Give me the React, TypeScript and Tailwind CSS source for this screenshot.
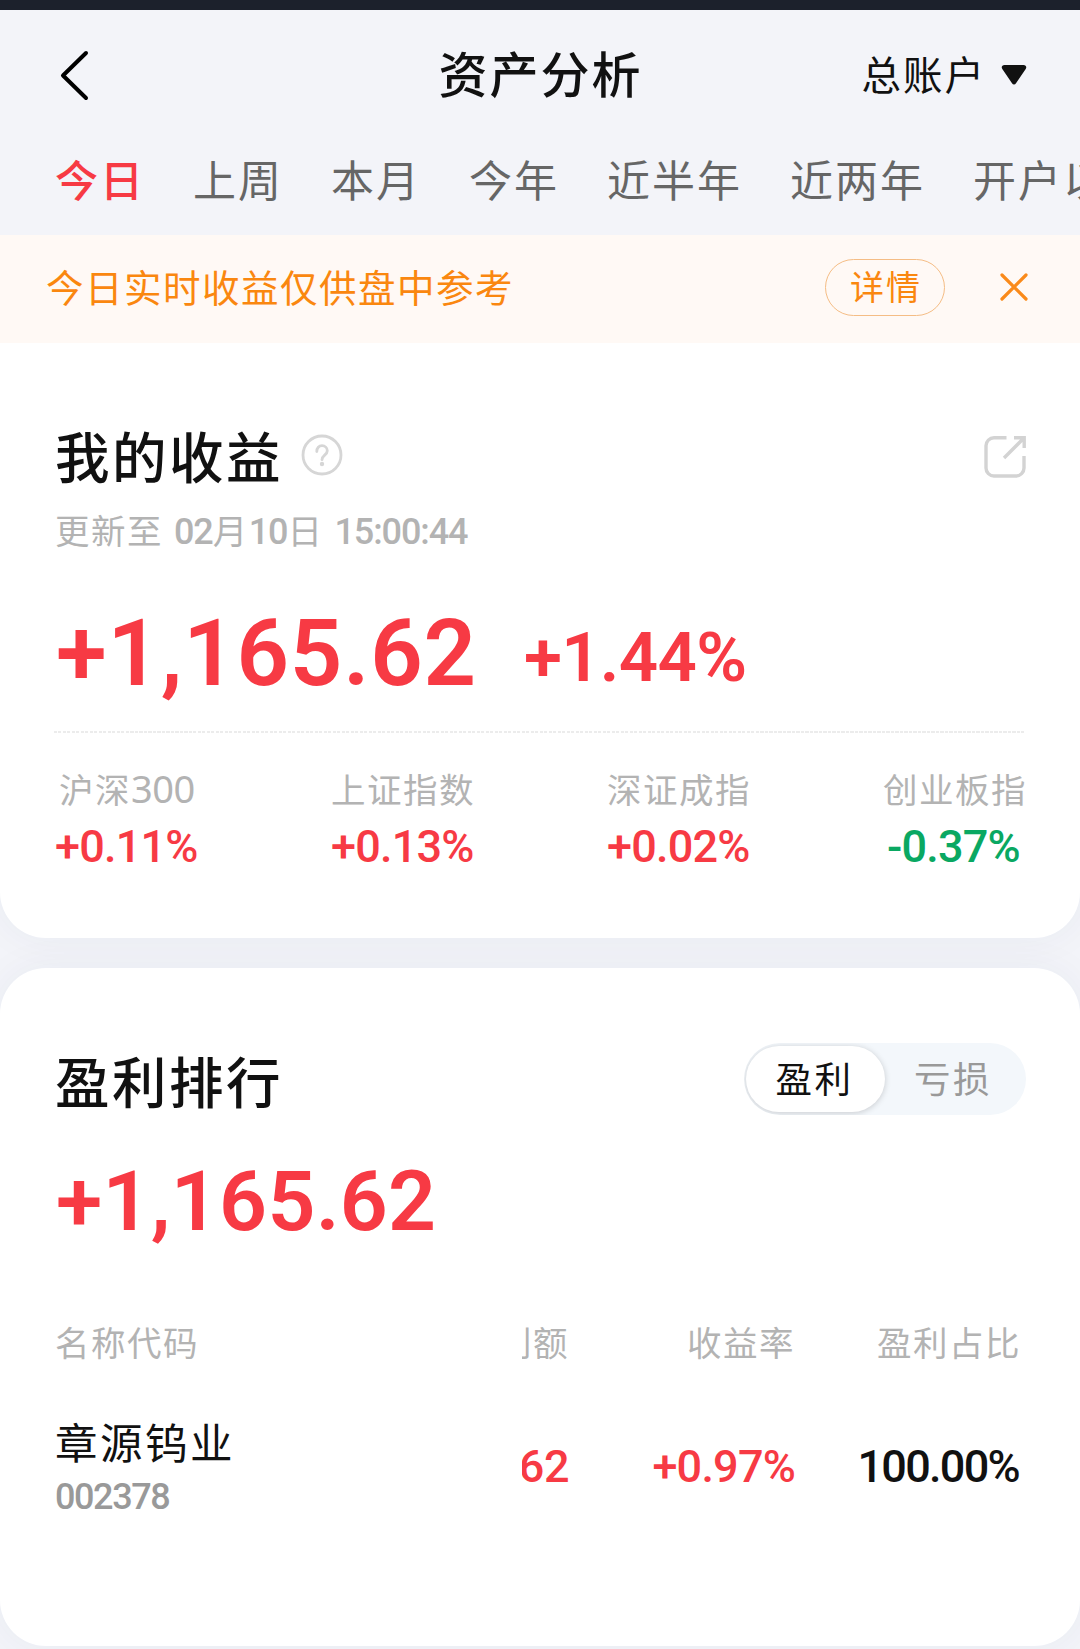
import clsx from 'clsx'

const periods = ['今日', '上周', '本月', '今年', '近半年', '近两年', '开户以来']

const indexes = [
  { name: '沪深', digits: '300', change: '+0.11%' },
  { name: '上证指数', change: '+0.13%' },
  { name: '深证成指', change: '+0.02%' },
  { name: '创业板指', change: '-0.37%' },
]

const holdings = [
  { name: '章源钨业', code: '002378', amount: '+1,165.62', rate: '+0.97%', share: '100.00%' },
]

function Header() {
  return (
    <header className="h-[225px] bg-[#f3f4f9]">
      <div className="grid h-[130px] grid-cols-[1fr_auto_1fr] items-center pl-[59px] pr-[53px]">
        <svg width="32" height="52" viewBox="0 0 32 52" fill="none" stroke="#000" strokeWidth="4" strokeLinecap="round" strokeLinejoin="round">
          <path d="M27 4 4 26.500l23 22.500" />
        </svg>
        <h1 className="-ml-[2px] pr-[3px] pb-[7px] text-[49px] leading-[72px] font-medium tracking-[2px] text-[#111]">资产分析</h1>
        <div className="flex items-center justify-end gap-[15px]">
          <span className="pb-[5px] text-[39.500px] leading-[58px] tracking-[2px] text-[#111]">总账户</span>
          <svg width="26" height="20" viewBox="0 0 26 20" fill="#111">
            <path d="M3.500 0h19c2.500 0 3.500 2.200 2.200 4L15 18.200c-1 1.600-3 1.600-4 0L1.300 4C0 2.200 1 0 3.500 0Z" />
          </svg>
        </div>
      </div>
      <nav className="flex gap-12 overflow-hidden pl-[55px]">
        {periods.map((period, i) => (
          <button
            key={period}
            className={clsx(
              'shrink-0 text-[43px] leading-[76px] tracking-[2px] whitespace-nowrap',
              i === 0 ? 'font-medium text-[#f73a44]' : 'text-[#666]',
            )}
          >
            {period}
          </button>
        ))}
      </nav>
    </header>
  )
}

function Notice() {
  return (
    <div className="relative flex h-[108px] items-center bg-[#fff9f5] pr-[51px] pb-[3px] pl-[46px] text-[#fa870f]">
      <p className="flex-1 pb-[3px] text-[37.500px] leading-[56px] tracking-[1.500px]">今日实时收益仅供盘中参考</p>
      <button className="h-[57px] w-[120px] rounded-full border border-[#f5bd85] pb-[3px] pl-[2px] text-[34px] leading-[52px] tracking-[2px]">
        详情
      </button>
      <svg className="mb-[2px] ml-[54px]" width="30" height="30" viewBox="0 0 30 30" stroke="#fa8a1a" strokeWidth="3.200" strokeLinecap="round">
        <path d="m3 3 24 24M27 3 3 27" />
      </svg>
    </div>
  )
}

function Earnings() {
  return (
    <section className="h-[595px] rounded-b-[46px] bg-white px-[54px] pt-[73px] shadow-[0_0_40px_rgba(40,50,90,0.05)]">
      <div className="flex h-20 items-center">
        <h2 className="pb-[3px] pl-[1px] text-[54.500px] leading-[80px] font-medium tracking-[2.500px] text-[#111]">我的收益</h2>
        <svg className="mb-[2px] ml-[18px]" width="42" height="42" viewBox="0 0 42 42" fill="none" stroke="#d6d6d6" strokeWidth="2.800">
          <circle cx="21" cy="21" r="19" />
          <path d="M15.800 17.500c0-3.500 2.200-5.800 5.200-5.800s5.300 2.200 5.300 5c0 4.300-5.300 4.600-5.300 9" strokeLinecap="round" />
          <circle cx="21" cy="30" r="2.200" fill="#d6d6d6" stroke="none" />
        </svg>
        <svg className="ml-auto" width="42" height="44" viewBox="0 0 42 44" fill="none" stroke="#d3d3d3" strokeWidth="3.400">
          <path d="M22.500 3.800H10a8 8 0 0 0-8 8V34a8 8 0 0 0 8 8h22a8 8 0 0 0 8-8V22" />
          <path d="M30 3.800h10.200V14M40 4 20 24" />
        </svg>
      </div>
      <p className="pt-[6px] pl-px text-[34.500px] leading-[54px] tracking-[1.500px] text-[#b3b3b3]">
        更新至
        <Digits className="ml-[11px]">02</Digits>月<Digits>10</Digits>日<Digits className="ml-[11px]">15:00:44</Digits>
      </p>
      <div className="flex h-[158px] items-start pt-[40px] font-[Roboto,sans-serif] leading-[110px] font-semibold text-[#f73a44]">
        <span className="pl-[2px] text-[92px] tracking-[0.800px]">+1,165.62</span>
        <span className="ml-[47px] pt-[4px] text-[69px] tracking-[-0.700px]">+1.44%</span>
      </div>
      <div className="mt-[14px] h-[2px] bg-[repeating-linear-gradient(90deg,#ececec_0_3px,transparent_3px_4.500px)]" />
      <div className="grid grid-cols-[276px_276px_276px_1fr] pt-[28px]">
        {indexes.map((item) => {
          const down = item.change.startsWith('-')
          return (
            <div key={item.name}>
              <div className={clsx('text-[34.500px] leading-[54px] tracking-[1.500px] whitespace-nowrap text-[#b3b3b3]', item.digits ? 'pl-[5px]' : 'pl-[1px]')}>
                {item.name}
                {item.digits && <span className="font-['Noto_Sans',sans-serif] text-[38px] tracking-[-0.500px]">{item.digits}</span>}
              </div>
              <div className={clsx('pt-[4px] font-[Roboto,sans-serif] text-[45px] leading-[56px] font-medium tracking-[-0.800px]', down ? 'pl-[5px] text-[#0aa862]' : 'pl-px text-[#f73a44]')}>
                {item.change}
              </div>
            </div>
          )
        })}
      </div>
    </section>
  )
}

function Digits({ children, className }: { children: string; className?: string }) {
  return <span className={clsx('font-[Roboto,sans-serif] text-[36px] font-medium tracking-[-1.100px]', className)}>{children}</span>
}

function Ranking() {
  return (
    <section className="mt-[30px] h-[678px] rounded-[46px] bg-white px-[54px] pt-[75px] shadow-[0_0_40px_rgba(40,50,90,0.05)]">
      <div className="flex h-[72px] items-center justify-between">
        <h2 className="pt-px pl-px text-[54.500px] leading-[72px] font-medium tracking-[2.500px] text-[#111]">盈利排行</h2>
        <div className="flex h-[72px] w-[282px] items-center overflow-hidden rounded-full bg-[#f3f7fb] pl-[2px] text-[36.500px] leading-[60px] tracking-[2.500px]">
          <button className="h-[66px] w-[139px] rounded-full bg-white pr-[2px] pb-[3px] text-[#111] shadow-[0_1px_6px_rgba(0,0,0,0.18)]">盈利</button>
          <button className="flex-1 pr-[5px] pb-[3px] text-[#999]">亏损</button>
        </div>
      </div>
      <div className="pt-[37px] pl-[2px] font-[Roboto,sans-serif] text-[84px] leading-[100px] font-semibold tracking-[0.300px] text-[#f73a44]">
        +1,165.62
      </div>
      <table className="mt-[62px] w-full table-fixed">
        <thead>
          <tr className="text-[34.500px] leading-[54px] tracking-[1.500px] whitespace-nowrap text-[#b3b3b3]">
            <th className="w-[468px] pl-px text-left font-normal">名称代码</th>
            <th className="w-[47px] font-normal">
              <div className="flex justify-end overflow-hidden">盈利额</div>
            </th>
            <th className="w-[226px] text-right font-normal">收益率</th>
            <th className="pr-[5px] text-right font-normal">盈利占比</th>
          </tr>
        </thead>
        <tbody className="font-[Roboto,sans-serif] text-[45px] leading-[56px] font-medium">
          {holdings.map((item) => (
            <tr key={item.code} className="h-[198px] text-right text-[#f73a44]">
              <td className="pb-[5px] pl-px text-left">
                <div className="font-['Noto_Sans_CJK_SC',sans-serif] text-[42.500px] leading-[62px] font-normal tracking-[2.500px] text-[#111]">{item.name}</div>
                <div className="pt-[3px] text-[36px] leading-[44px] tracking-[-1.400px] text-[#999]">{item.code}</div>
              </td>
              <td>
                <div className="flex justify-end overflow-hidden tracking-[-0.500px]">{item.amount}</div>
              </td>
              <td className="tracking-[-0.800px]">{item.rate}</td>
              <td className="pr-[7px] tracking-[-1.700px] text-[#111]">{item.share}</td>
            </tr>
          ))}
        </tbody>
      </table>
    </section>
  )
}

export default function App() {
  return (
    <div className="h-[1649px] w-[1080px] overflow-hidden bg-[#f3f4f9] font-['Noto_Sans_CJK_SC',sans-serif]">
      <div className="h-[10px] bg-[#1c212c]" />
      <Header />
      <Notice />
      <Earnings />
      <Ranking />
    </div>
  )
}
